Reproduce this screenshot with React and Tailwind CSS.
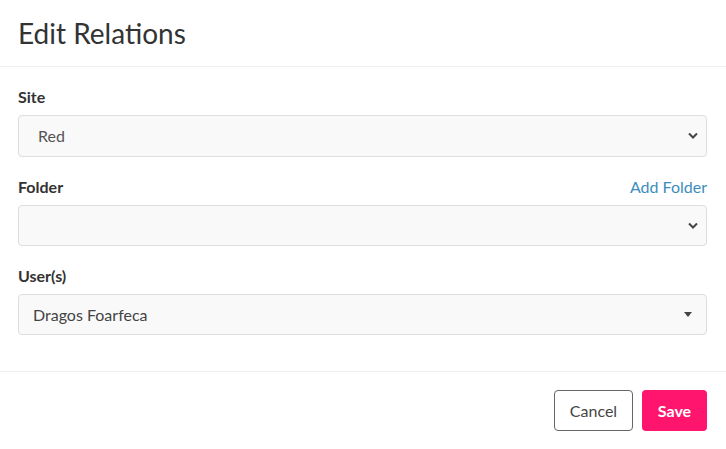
import React from "react";

const Chevron = () => (
  <svg width="10" height="7" viewBox="0 0 10 7" className="text-[#444]">
    <path d="M1 1.5 L5 5.5 L9 1.5" fill="none" stroke="currentColor" strokeWidth="2" />
  </svg>
);

export default function App() {
  return (
    <div className="w-[726px] h-[449px] bg-white text-[#333]" style={{ fontFamily: "Lato, 'Open Sans', sans-serif" }}>
      <div className="h-[67px] border-b border-[#eeeeee] pl-[18px] pr-[19px] flex items-center">
        <h1 className="text-[28px] leading-none text-[#333] font-normal">Edit Relations</h1>
      </div>
      <div className="pl-[18px] pr-[19px] pt-[20px] pb-[36px] flex flex-col">
        <div className="text-[16px] font-bold leading-[20px] mb-[8px]">Site</div>
        <div className="h-[41.5px] rounded-[4px] border border-[#dddddd] bg-[#f9f9f9] flex items-center justify-between pl-[19px] pr-[8px]">
          <span className="text-[16px] text-[#555]">Red</span>
          <Chevron />
        </div>
        <div className="flex justify-between items-end mt-[20px] mb-[8px]">
          <span className="text-[16px] font-bold leading-[20px]">Folder</span>
          <span className="text-[16px] leading-[20px] text-[#3c8dbc]">Add Folder</span>
        </div>
        <div className="h-[41.5px] rounded-[4px] border border-[#dddddd] bg-[#f9f9f9] flex items-center justify-end pr-[8px]">
          <Chevron />
        </div>
        <div className="text-[16px] font-bold leading-[20px] mt-[20px] mb-[8px]">User(s)</div>
        <div className="h-[41px] rounded-[4px] border border-[#dddddd] bg-[#f9f9f9] flex items-center justify-between pl-[14px] pr-[14px]">
          <span className="text-[16px] text-[#444]">Dragos Foarfeca</span>
          <svg width="8" height="5" viewBox="0 0 8 5"><path d="M0 0 L8 0 L4 5 Z" fill="#444" /></svg>
        </div>
      </div>
      <div className="border-t border-[#eeeeee] pl-[18px] pr-[19px] pt-[18px] flex justify-end gap-[9px]">
        <button className="h-[41px] w-[79px] rounded-[4px] border border-[#666] bg-white text-[16px] text-[#444]">Cancel</button>
        <button className="h-[41px] w-[65px] rounded-[4px] bg-[#ff156e] text-white text-[16px] font-bold">Save</button>
      </div>
    </div>
  );
}
